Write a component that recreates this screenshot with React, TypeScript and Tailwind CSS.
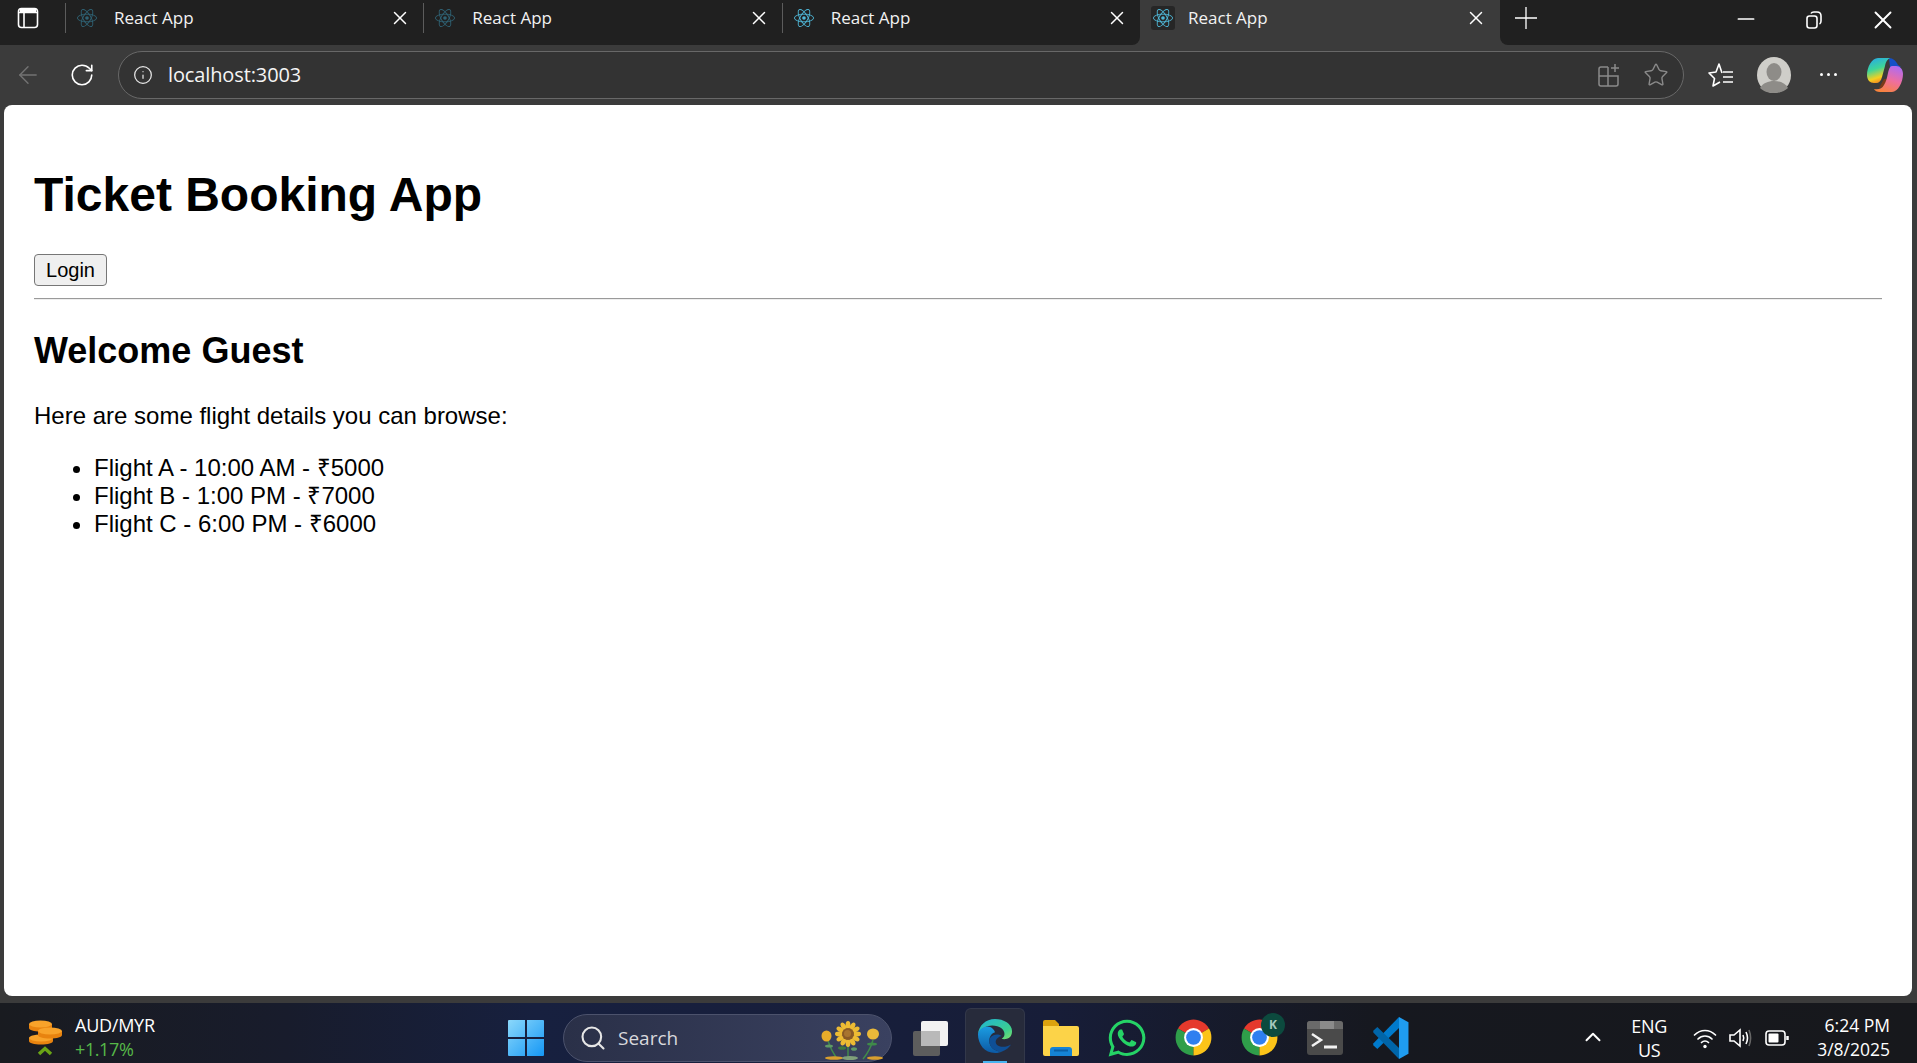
import { ArrowLeft, ChevronUp, Info, Minus, RotateCw, Search, Star, X } from "lucide-react";
import { FaWhatsapp } from "react-icons/fa";

function ReactIcon({ dim }: { dim?: boolean }) {
  const color = dim ? "#2f6274" : "#4fb8d8";
  return (
    <svg width="22" height="24" viewBox="-12 -12 24 24" fill="none" stroke={color} strokeWidth="1">
      <circle r="2" fill={color} stroke="none" />
      <ellipse rx="10.5" ry="4.2" />
      <ellipse rx="10.5" ry="4.2" transform="rotate(60)" />
      <ellipse rx="10.5" ry="4.2" transform="rotate(120)" />
    </svg>
  );
}

function Tab({ dim }: { dim?: boolean }) {
  return (
    <div className="flex h-full w-[358.5px] items-center pb-[9px]">
      <span className="h-[30px] w-px bg-[#5c5c5c]" />
      <span className="ml-[10px] flex w-[22px]">
        <ReactIcon dim={dim} />
      </span>
      <span className="ml-[16px] text-[17px] text-[#f2f2f2]">React App</span>
      <X className="ml-auto mr-[12px] h-[22px] w-[22px] text-white" strokeWidth={1.6} />
    </div>
  );
}

function Copilot() {
  return (
    <svg width="36" height="36" viewBox="0 0 36 36">
      <defs>
        <linearGradient id="cp1" x1="0" y1="0" x2="0.3" y2="1">
          <stop offset="0" stopColor="#25a6ee" />
          <stop offset="0.5" stopColor="#3ed69a" />
          <stop offset="0.85" stopColor="#f5d020" />
          <stop offset="1" stopColor="#f59a20" />
        </linearGradient>
        <linearGradient id="cp2" x1="0.7" y1="0" x2="0.3" y2="1">
          <stop offset="0" stopColor="#b06cf0" />
          <stop offset="0.5" stopColor="#ee6ea0" />
          <stop offset="1" stopColor="#f8833c" />
        </linearGradient>
      </defs>
      <path d="M22 1c4 0 7 3 9 7l3 2H23z" fill="#1450c8" />
      <path d="M11 1h12c-2 1-4 3-5 8l-3 11c-1 4-3 6-6 6H7c-4 0-7-3-7-8C0 10 5 1 11 1z" fill="url(#cp1)" />
      <path d="M17 22h5l-2 8-8 1z" fill="#7a3a18" />
      <path d="M25 9h4c4 0 7 3 7 8 0 8-5 18-11 18H13c-3 0-5-1-6-3 4 1 8 0 10-4 2-3 3-7 4-12 1-4 2-7 4-7z" fill="url(#cp2)" />
    </svg>
  );
}

function Edge() {
  return (
    <svg width="36" height="36" viewBox="0 0 38 38">
      <defs>
        <linearGradient id="eg1" x1="0" y1="0" x2="1" y2="1">
          <stop offset="0" stopColor="#1fb3d6" />
          <stop offset="0.7" stopColor="#3ccf8e" />
          <stop offset="1" stopColor="#7fe06a" />
        </linearGradient>
        <linearGradient id="eg2" x1="0" y1="0" x2="0" y2="1">
          <stop offset="0" stopColor="#1b9de2" />
          <stop offset="1" stopColor="#0c59a4" />
        </linearGradient>
      </defs>
      <path d="M19 1C9 1 2 8 1 17c3-6 9-9 15-9 8 0 13 4 13 9 0 2-1 4-3 5 4 1 11 0 11-8C37 6 28 1 19 1z" fill="url(#eg1)" />
      <path d="M1 17c0 11 7 20 18 20 3 0 6-1 8-2-7 1-14-3-14-11 0-5 3-8 6-9-1-3-4-6-8-6-4 0-9 3-10 8z" fill="url(#eg2)" />
      <path d="M13 24c0 8 7 12 14 11 4-1 7-4 9-7-5 3-11 3-14 1-3-2-3-6 0-8 1-1 3-2 4-2-3-2-6-2-8-1-3 1-5 3-5 6z" fill="#0f4f96" />
    </svg>
  );
}

function Chrome({ size = 36 }: { size?: number }) {
  return (
    <svg width={size} height={size} viewBox="0 0 48 48">
      <path d="M24 24 6.7 14A20 20 0 0 1 41.3 14Z" fill="#e5392c" />
      <path d="M24 24 6.7 14A20 20 0 0 0 24 44Z" fill="#2f9e4a" />
      <path d="M24 24 41.3 14A20 20 0 0 1 24 44Z" fill="#fcc419" />
      <circle cx="24" cy="24" r="10.5" fill="#fff" />
      <circle cx="24" cy="24" r="8.2" fill="#2f7ff0" />
    </svg>
  );
}

function Sunflowers() {
  const petals = [0, 30, 60, 90, 120, 150, 180, 210, 240, 270, 300, 330];
  return (
    <svg width="64" height="46" viewBox="0 0 64 46">
      <path d="M28 26v18M8 26c2 6 5 12 9 18M53 25c-2 7-5 13-10 19" stroke="#3f8a4a" strokeWidth="1.5" fill="none" />
      <ellipse cx="14" cy="43" rx="9" ry="1.8" fill="#d99f2e" />
      <ellipse cx="55" cy="43" rx="8" ry="1.8" fill="#d99f2e" />
      <ellipse cx="30" cy="43" rx="8" ry="2" fill="#7f9f7a" />
      <ellipse cx="9" cy="31" rx="4" ry="1.6" fill="#5f9a66" />
      <ellipse cx="22" cy="33" rx="4" ry="1.8" fill="#3f7a3f" />
      <ellipse cx="34" cy="34" rx="3" ry="1.8" fill="#5f9a66" />
      <ellipse cx="52" cy="29" rx="5" ry="1.6" fill="#3f8a4a" />
      <g fill="#edbb33">
        {petals.map((a) => (
          <ellipse key={a} cx="28" cy="10" rx="2.4" ry="4" transform={`rotate(${a} 28 19)`} />
        ))}
      </g>
      <circle cx="28" cy="19" r="6" fill="#8a5a25" />
      <circle cx="27.500" cy="18.500" r="3.500" fill="#a8742f" />
      <ellipse cx="6.500" cy="21" rx="5" ry="5.500" fill="#e8ac2a" />
      <ellipse cx="53" cy="19" rx="6" ry="5.500" fill="#eab93a" />
    </svg>
  );
}

function TaskSlot({ children }: { children: React.ReactNode }) {
  return <div className="relative flex h-full w-[66px] items-center justify-center">{children}</div>;
}

export default function App() {
  return (
    <div className="flex h-[1063px] w-[1917px] flex-col overflow-hidden bg-[#3b3b3b] font-['Open_Sans',sans-serif]">
      {/* tab strip */}
      <div className="flex h-[45px] shrink-0">
        <div className="flex w-[1140px] rounded-br-lg bg-[#202020]">
          <div className="flex w-[65px] items-center justify-center pb-[9px] pr-[8px]">
            <svg width="22" height="22" viewBox="0 0 22 22" fill="none" stroke="#fff" strokeWidth="1.6">
              <rect x="1.5" y="1.5" width="19" height="19" rx="3" />
              <path d="M1.5 5.5h19M7 5.5v15" />
              <path d="M3 2h16v3.5H3z" fill="#fff" stroke="none" />
            </svg>
          </div>
          <Tab dim />
          <Tab dim />
          <Tab />
        </div>
        <div className="flex w-[360px] items-center rounded-tl-md pb-[9px]">
          <span className="ml-[11px] flex h-[24px] w-[24px] items-center justify-center rounded-[3px] bg-[#262626]">
            <ReactIcon />
          </span>
          <span className="ml-[13px] text-[17px] text-[#f2f2f2]">React App</span>
          <X className="ml-auto mr-[13px] h-[22px] w-[22px] text-white" strokeWidth={1.6} />
        </div>
        <div className="flex flex-1 items-center rounded-bl-lg bg-[#202020] pb-[9px] text-white">
          <svg className="ml-[15px]" width="22" height="22" viewBox="0 0 22 22" stroke="#fff" strokeWidth="1.3">
            <path d="M11 0v22M0 11h22" />
          </svg>
          <Minus className="ml-[196px] mt-[2px] h-[26px] w-[26px]" strokeWidth={1.6} />
          <svg className="ml-[47px] mt-[3px]" width="16" height="18" viewBox="0 0 16 18" fill="none" stroke="#fff" strokeWidth="1.6">
            <rect x="1" y="5" width="10" height="12" rx="2.5" />
            <path d="M5 2.5c.5-1 1.500-1.500 3-1.500h3c2.500 0 4 1.500 4 4v5c0 1.500-.5 2.500-1.500 3" />
          </svg>
          <X className="ml-[46px] mt-[3px] h-[30px] w-[30px]" strokeWidth={1.5} />
        </div>
      </div>

      {/* toolbar */}
      <div className="flex h-[60px] shrink-0 items-center pb-[1px] pl-[6px]">
        <div className="flex w-[44px] justify-center">
          <ArrowLeft className="h-[28px] w-[28px] text-[#737373]" strokeWidth={1.2} />
        </div>
        <div className="ml-[10px] flex w-[44px] justify-center">
          <RotateCw className="h-[26px] w-[26px] text-white" strokeWidth={1.5} />
        </div>
        <div className="ml-[14px] flex h-[48px] w-[1566px] items-center rounded-full border-[1.5px] border-[#686868] bg-[#333333] pl-[14px]">
          <Info className="h-[20px] w-[20px] text-[#e6e6e6]" strokeWidth={1.5} />
          <span className="ml-[15px] text-[20px] tracking-[-0.12px] text-[#f5f5f5]">localhost:3003</span>
          <svg className="ml-auto" width="22" height="24" viewBox="0 0 22 24" fill="none" stroke="#8a8a8a" strokeWidth="1.5">
            <path d="M10 4H3a2 2 0 0 0-2 2v15a2 2 0 0 0 2 2h15a2 2 0 0 0 2-2v-8H1M10 4v19" />
            <path d="M17 1v8M13 5h8" />
          </svg>
          <Star className="ml-[23px] mr-[14px] h-[26px] w-[26px] text-[#8a8a8a]" strokeWidth={1.3} />
        </div>
        <div className="ml-[15px] flex w-[44px] justify-center">
          <svg width="26" height="26" viewBox="0 0 26 26" fill="none" stroke="#fff" strokeWidth="1.6" strokeLinejoin="round">
            <path d="M14 11 11 2 8 10l-7 1 5.500 5.500L5 24l7-4" />
            <path d="M15 10h10M15 15h10M15 20h10" />
          </svg>
        </div>
        <div className="ml-[9px] flex w-[44px] justify-center">
          <svg width="34" height="36" viewBox="0 0 34 36">
            <ellipse cx="17" cy="18" rx="17" ry="18" fill="#cfcec9" />
            <ellipse cx="17" cy="15" rx="7.500" ry="9" fill="#8e8c88" />
            <path d="M3 31c3-5 8-7 14-7s11 2 14 7c-3 3-8 5-14 5S6 34 3 31z" fill="#8e8c88" />
          </svg>
        </div>
        <div className="ml-[10px] flex w-[44px] justify-center gap-[4px]">
          <span className="h-[3px] w-[3px] rounded-full bg-white" />
          <span className="h-[3px] w-[3px] rounded-full bg-white" />
          <span className="h-[3px] w-[3px] rounded-full bg-white" />
        </div>
        <div className="ml-[13px] flex w-[44px] justify-center">
          <Copilot />
        </div>
      </div>

      {/* page */}
      <main className="ml-[4px] mr-[5px] h-[891px] shrink-0 rounded-lg bg-white px-[30px] pt-[30px] font-['Liberation_Sans',sans-serif] text-[24px] leading-[28px] text-black">
        <h1 className="my-[32px] text-[48px] font-bold leading-[55px]">Ticket Booking App</h1>
        <button className="h-[32px] w-[73px] rounded-[4px] border-[1.5px] border-[#767676] bg-[#efefef] text-[20px] leading-[23px]">
          Login
        </button>
        <hr className="mt-[12px] border-b border-t border-b-[#eeeeee] border-t-[#9a9a9a]" />
        <h2 className="mb-[31px] mt-[30px] text-[36px] font-bold leading-[41px]">Welcome Guest</h2>
        <p className="mb-[24px]">Here are some flight details you can browse:</p>
        <ul className="list-disc pl-[60px]">
          <li>Flight A - 10:00 AM - ₹5000</li>
          <li>Flight B - 1:00 PM - ₹7000</li>
          <li>Flight C - 6:00 PM - ₹6000</li>
        </ul>
      </main>

      {/* taskbar */}
      <footer className="mt-[7px] flex h-[60px] shrink-0 items-center bg-[linear-gradient(90deg,#191b20_0%,#181c2c_15%,#17203f_28%,#171d38_55%,#16181f_72%,#17181c_100%)] pt-[9px] text-white">
        <div className="flex h-full w-[508px] items-center pl-[28px]">
          <svg width="36" height="36" viewBox="0 0 36 36">
            <g fill="#e8830f">
              <path d="M1 4v4c0 2 5 3.500 11.500 3.500S24 10 24 8V4z" />
              <ellipse cx="12.500" cy="4" rx="11.500" ry="3.500" fill="#f8a32a" />
              <path d="M1 18v3c0 2 5 3.500 12 3.500S25 23 25 21v-3z" />
              <ellipse cx="13" cy="18" rx="12" ry="3.500" fill="#f8a32a" />
              <path d="M10 11v4c0 2 5 3.500 12 3.500S34 17 34 15v-4z" />
              <ellipse cx="22" cy="11" rx="12" ry="3.500" fill="#f8a32a" />
            </g>
            <path d="M11 34l6-5.500 6 5.500" fill="none" stroke="#6aa416" strokeWidth="3.500" />
          </svg>
          <div className="ml-[11px] flex flex-col text-[18px] leading-[24px]">
            <span className="-mt-[1px] tracking-[-0.25px]">AUD/MYR</span>
            <span className="tracking-[-0.4px] text-[#56b848]">+1.17%</span>
          </div>
        </div>

        <svg width="36" height="36" viewBox="0 0 36 36">
          <defs>
            <linearGradient id="win" x1="0" y1="0" x2="1" y2="1">
              <stop offset="0" stopColor="#8bd8fb" />
              <stop offset="1" stopColor="#1597f5" />
            </linearGradient>
          </defs>
          <path d="M0 1a1 1 0 0 1 1-1h16v17H0zM19 0h16a1 1 0 0 1 1 1v16H19zM0 19h17v17H1a1 1 0 0 1-1-1zM19 19h17v16a1 1 0 0 1-1 1H19z" fill="url(#win)" />
        </svg>

        <div className="ml-[19px] flex h-[48px] w-[329px] items-center rounded-full border border-[#4c526c] bg-[linear-gradient(90deg,#2a3048,#3a4160)] pl-[15px]">
          <Search className="h-[28px] w-[28px] text-[#e6e6e6]" strokeWidth={1.8} />
          <span className="ml-[11px] mt-[1px] text-[19px] text-[#d8d8dc]">Search</span>
          <span className="ml-auto mr-[7px] flex">
            <Sunflowers />
          </span>
        </div>

        <div className="ml-[14px] flex w-[48px] justify-center">
          <svg width="36" height="36" viewBox="0 0 36 36">
            <rect x="1" y="11" width="27" height="25" rx="2" fill="#5d5d5d" />
            <rect x="9" y="1" width="27" height="25" rx="2" fill="#f2f2f2" />
            <rect x="9" y="11" width="19" height="15" fill="#b9b9b9" />
          </svg>
        </div>

        <div className="relative ml-[11px] flex h-[55px] w-[60px] items-center justify-center self-end rounded-t-md border border-b-0 border-[#33384a] bg-[#272b3b]">
          <span className="flex">
            <Edge />
          </span>
          <span className="absolute bottom-0 left-[17px] h-[2px] w-[24px] bg-[#47b4f0]" />
        </div>

        <div className="ml-[3px] flex h-full">
          <TaskSlot>
            <svg width="36" height="38" viewBox="0 0 36 38">
              <path d="M0 3a2 2 0 0 1 2-2h10l4 4v4H0z" fill="#dca20e" />
              <path d="M0 7h34a2 2 0 0 1 2 2v26a2 2 0 0 1-2 2H2a2 2 0 0 1-2-2z" fill="#fcd348" />
              <path d="M7 31a3 3 0 0 1 3-3h16a3 3 0 0 1 3 3v6H7z" fill="#1583d6" />
              <path d="M11 31.500h14" stroke="#0b5fa6" strokeWidth="2" />
            </svg>
          </TaskSlot>
          <TaskSlot>
            <FaWhatsapp className="h-[42px] w-[42px] text-[#25d366]" />
          </TaskSlot>
          <TaskSlot>
            <Chrome size={43} />
          </TaskSlot>
          <TaskSlot>
            <Chrome size={43} />
            <span className="absolute right-[7px] top-[1px] flex h-[24px] w-[24px] items-center justify-center rounded-full bg-[#0c4a3e] text-[12px] font-bold text-[#a5c9bd]">
              K
            </span>
          </TaskSlot>
          <TaskSlot>
            <svg width="36" height="34" viewBox="0 0 36 34">
              <rect width="36" height="34" rx="3" fill="#4a4a4a" />
              <path d="M0 3a3 3 0 0 1 3-3h30a3 3 0 0 1 3 3v5H0z" fill="#6a6a6a" />
              <path d="M13 0h14v8H13z" fill="#8b8b8b" />
              <path d="M5 13l9 6-9 6" fill="none" stroke="#f2f2f2" strokeWidth="2.500" />
              <path d="M17 26h13" stroke="#f2f2f2" strokeWidth="3" />
            </svg>
          </TaskSlot>
          <TaskSlot>
            <svg width="38" height="44" viewBox="0 0 100 100" preserveAspectRatio="none">
              <path d="M71 2V27L14 75 4 67Q2 64 4 62Z" fill="#007acc" />
              <path d="M4 38Q2 36 4 33L14 25 71 73V98Z" fill="#0065a9" />
              <path d="M71 2 96 14V86L71 98Z" fill="#1f9cf0" />
            </svg>
          </TaskSlot>
        </div>

        <div className="ml-auto flex h-full items-center pr-[27px]">
          <ChevronUp className="-mt-[1px] h-[26px] w-[26px]" strokeWidth={1.8} />
          <div className="ml-[13px] flex w-[60px] flex-col items-center text-[18px] leading-[24px] tracking-[-0.3px]">
            <span>ENG</span>
            <span>US</span>
          </div>
          <svg className="ml-[14px]" width="24" height="22" viewBox="0 0 24 22" fill="none" stroke="#fff" strokeWidth="1.7" strokeLinecap="round">
            <path d="M1.500 8c6-6 15-6 21 0M5 12c4-4 10-4 14 0M8.500 15.500c2-2 5-2 7 0" />
            <circle cx="12" cy="19.500" r="1.700" fill="#fff" stroke="none" />
          </svg>
          <svg className="ml-[11px]" width="24" height="24" viewBox="0 0 24 24" fill="none" stroke="#fff" strokeWidth="1.600">
            <path d="M2 9h4l6-5v16l-6-5H2z" />
            <path d="M15 9c1 2 1 4 0 6M18 6c2 4 2 8 0 12" />
            <path d="M21 4c2 5 2 11 0 16" stroke="#666" />
          </svg>
          <svg className="ml-[13px]" width="24" height="18" viewBox="0 0 24 18" fill="none" stroke="#fff" strokeWidth="1.600">
            <rect x="1" y="2" width="19" height="14" rx="3" />
            <rect x="3.500" y="4.500" width="10" height="9" rx="1" fill="#fff" stroke="none" />
            <path d="M22.500 7v4" strokeWidth="2.500" />
          </svg>
          <div className="ml-[28px] -mt-[2px] flex flex-col items-end text-[17.5px] leading-[24px]">
            <span>6:24 PM</span>
            <span>3/8/2025</span>
          </div>
        </div>
      </footer>
    </div>
  );
}
